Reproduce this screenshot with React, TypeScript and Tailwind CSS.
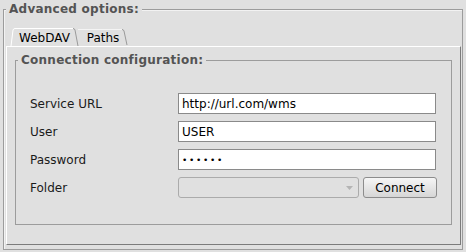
import React from "react";

type TabProps = {
  label: string;
  width: number;
  selected?: boolean;
};

function Tab({ label, width, selected }: TabProps) {
  const h = 18;
  return (
    <div className="relative h-[18px] flex items-center justify-center" style={{ width }}>
      <svg className="absolute inset-0" width={width} height={h}>
        {selected ? (
          <>
            <path d={`M1 ${h} L3 2 Q3.5 0.5 5 0.5 L${width - 6} 0.5`} fill="none" stroke="#ffffff" />
            <path d={`M${width - 6} 0.5 Q${width - 4.5} 0.5 ${width - 4} 2 L${width - 1} ${h}`} fill="none" stroke="#9a9a9a" />
          </>
        ) : (
          <>
            <path d={`M0 1.5 L${width - 6} 1.5`} fill="none" stroke="#f4f4f4" />
            <path d={`M${width - 6} 1.5 Q${width - 4.5} 1.5 ${width - 4} 3 L${width - 1} ${h - 1}`} fill="none" stroke="#9a9a9a" />
          </>
        )}
      </svg>
      <span className="relative text-black leading-[14px] mt-[1px]">{label}</span>
    </div>
  );
}

function Row({ label, children }: { label: string; children: React.ReactNode }) {
  return (
    <div className="flex items-center h-[21px]">
      <span className="w-[148px] text-[#1a1a1a]">{label}</span>
      {children}
    </div>
  );
}

function TextField({ value, password }: { value: string; password?: boolean }) {
  return (
    <div className="w-[258px] h-[21px] border border-[#8a8a8a] bg-white pl-[3px] flex items-center text-black leading-[14px]">
      {password ? (
        <span className="text-[9px] tracking-[1.7px] leading-[10px]">{value}</span>
      ) : (
        value
      )}
    </div>
  );
}

export default function App() {
  return (
    <div
      className="w-[466px] h-[252px] bg-[#e0e0e0] pt-[9px] pl-[3px] text-[12px]"
      style={{ fontFamily: '"DejaVu Sans", Verdana, sans-serif' }}
    >
      {/* Advanced options titled border */}
      <div className="relative w-[460px] h-[241px] border border-[#9c9c9c] shadow-[inset_1px_1px_0_#f2f2f2]">
        <span className="absolute left-[2px] top-[-8px] px-[3px] bg-[#e0e0e0] font-bold text-[#545454] leading-[14px] tracking-[0.25px]">
          Advanced options:
        </span>

        <div className="ml-[2px] mt-[18px]">
          {/* tab strip */}
          <div className="flex h-[18px] pl-[4px]">
            <Tab label="WebDAV" width={69} selected />
            <div className="-ml-[1px]">
              <Tab label="Paths" width={50} />
            </div>
          </div>

          {/* tab content */}
          <div className="w-[455px] h-[199px] border-t border-l border-t-white border-l-white border-r border-b border-r-[#7c7c7c] border-b-[#7c7c7c] pt-[13px] pl-[8px]">
            <div className="relative w-[437px] h-[165px] border border-[#9c9c9c]">
              <span className="absolute left-[2px] top-[-8px] px-[3px] bg-[#e0e0e0] font-bold text-[#545454] leading-[14px] tracking-[0.25px]">
                Connection configuration:
              </span>

              <div className="flex flex-col gap-[7px] pl-[14px] pt-[32px]">
                <Row label="Service URL">
                  <TextField value="http://url.com/wms" />
                </Row>
                <Row label="User">
                  <TextField value="USER" />
                </Row>
                <Row label="Password">
                  <TextField value="••••••" password />
                </Row>
                <Row label="Folder">
                  <div className="flex gap-[4px]">
                    <div className="w-[181px] h-[21px] border border-[#ababab] rounded-[3px] flex items-center justify-end pr-[5px]">
                      <svg width="7" height="4" viewBox="0 0 7 4">
                        <path d="M0 0 L7 0 L3.5 4 Z" fill="#b4b4b4" />
                      </svg>
                    </div>
                    <button className="w-[74px] h-[21px] border border-[#8c8c8c] rounded-[3px] bg-gradient-to-b from-[#f6f6f6] to-[#d6d6d6] text-black leading-[14px] flex items-center justify-center">
                      Connect
                    </button>
                  </div>
                </Row>
              </div>
            </div>
          </div>
        </div>
      </div>
    </div>
  );
}
